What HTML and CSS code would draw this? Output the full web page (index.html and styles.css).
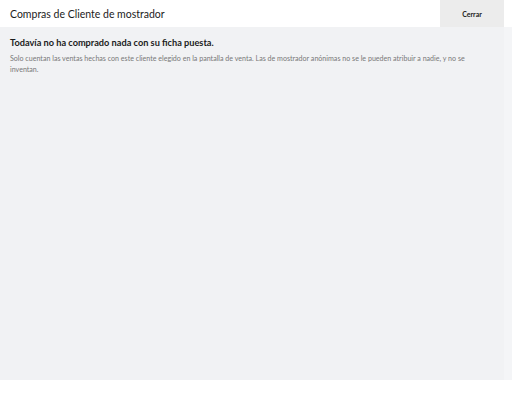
FILE: index.html
```html
<!DOCTYPE html>
<html lang="es">
<head>
    <meta charset="UTF-8">
    <title>Compras de cliente</title>
    <link rel="stylesheet" href="styles.css">
</head>
<body>
    <div class="panel">
        <div class="cab">
            <h1>Compras de Cliente de mostrador</h1>
            <button class="cerrar">Cerrar</button>
        </div>
        <div class="cuerpo">
            <div class="contenido">
                <h2>Todavía no ha comprado nada con su ficha puesta.</h2>
                <p>Solo cuentan las ventas hechas con este cliente elegido en la pantalla de venta. Las de mostrador anónimas no se le pueden atribuir a nadie, y no se inventan.</p>
            </div>
            <div class="barra"></div>
        </div>
    </div>
</body>
</html>
```

FILE: styles.css
```css
body {
    margin: 0;
    font-family: Lato, "Open Sans", sans-serif;
    background: #fff;
    color: #1b1b1b;
}

.panel {
    width: 512px;
    height: 380px;
    display: flex;
    flex-direction: column;
}

.cab {
    height: 27px;
    display: flex;
    align-items: center;
    justify-content: space-between;
    padding-left: 10px;
    padding-right: 8px;
    background: #fff;
}

.cab h1 {
    margin: 0;
    font-size: 10.5px;
    font-weight: 400;
}

.cerrar {
    width: 64px;
    height: 27px;
    border: none;
    background: #ececec;
    font-family: inherit;
    font-size: 7px;
    font-weight: 700;
    color: #222;
    cursor: pointer;
}

.cuerpo {
    flex: 1;
    display: flex;
    background: #f1f2f4;
}

.contenido {
    flex: 1;
    padding: 10px 10px 0 10px;
}

.barra {
    width: 8px;
    background: #f4f5f7;
}

.contenido h2 {
    margin: 0 0 5px 0;
    font-size: 9.2px;
    font-weight: 700;
}

.contenido p {
    margin: 0;
    font-size: 7.1px;
    line-height: 11px;
    color: #787878;
}
```
